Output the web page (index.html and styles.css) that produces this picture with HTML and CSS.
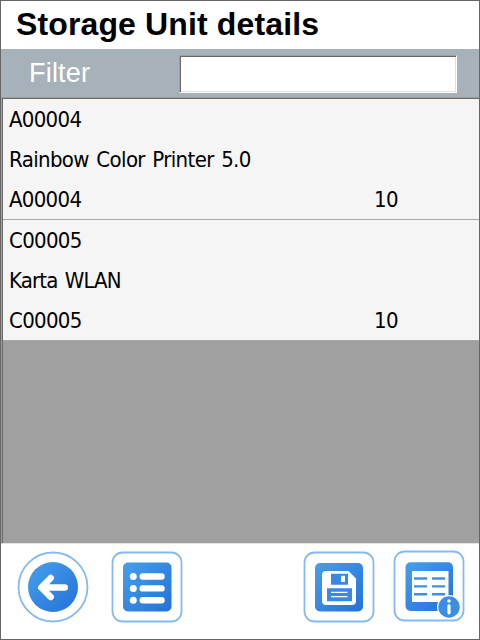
FILE: index.html
```html
<!DOCTYPE html>
<html lang="en">
<head>
<meta charset="utf-8">
<title>Storage Unit details</title>
<link rel="stylesheet" href="styles.css">
</head>
<body>
<main class="window">
  <h1 class="title"><span>Storage Unit details</span></h1>
  <div class="filter">
    <label class="filter-label" for="filter">Filter</label>
    <input class="filter-input" id="filter" type="text">
  </div>
  <section class="list">
    <article class="item">
      <div class="line">A00004</div>
      <div class="line name">Rainbow Color Printer 5.0</div>
      <div class="line"><span class="code">A00004</span><span>10</span></div>
    </article>
    <article class="item">
      <div class="line">C00005</div>
      <div class="line name short">Karta WLAN</div>
      <div class="line"><span class="code">C00005</span><span>10</span></div>
    </article>
  </section>
  <nav class="toolbar">
    <svg class="btn back" viewBox="0 0 72 72">
      <defs><linearGradient id="g" x1="0" y1="0" x2="1" y2="1"><stop offset="0" stop-color="#46a0ea"/><stop offset="1" stop-color="#2470da"/></linearGradient></defs>
      <circle cx="36" cy="36" r="34.5" class="frame"/>
      <circle cx="36" cy="36" r="25" fill="url(#g)"/>
      <path d="M47.7 36.5H25M33.7 27L24.3 36.5L33.7 46" class="arrow"/>
    </svg>
    <svg class="btn menu" viewBox="0 0 72 72">
      <rect x="1.5" y="1.5" width="69" height="69" rx="10" class="frame"/>
      <rect x="12" y="11.5" width="48.5" height="49" rx="5" fill="url(#g)"/>
      <g fill="#fff"><circle cx="22.3" cy="25.5" r="3.5"/><circle cx="22.3" cy="37.4" r="3.5"/><circle cx="22.3" cy="49.3" r="3.5"/>
      <rect x="28.5" y="22.3" width="25.2" height="6.4" rx="3.2"/><rect x="28.5" y="34.2" width="25.2" height="6.4" rx="3.2"/><rect x="28.5" y="46.1" width="25.2" height="6.4" rx="3.2"/></g>
    </svg>
    <svg class="btn save" viewBox="0 0 72 72">
      <rect x="1.5" y="1.5" width="69" height="69" rx="10" class="frame"/>
      <rect x="12" y="12" width="48" height="48.5" rx="5" fill="url(#g)"/>
      <path fill="#fff" d="M23 20H45.5L53 27.5V50Q53 54 49 54H23Q19 54 19 50V24Q19 20 23 20Z"/>
      <path fill="#3789e3" fill-rule="evenodd" d="M28 22.7H45V33.7H28ZM38 24.7V31H42V24.7ZM24 37.3H49V50.3H24ZM28 40.7V42H44.5V40.7ZM28 45V46.3H44.5V45Z"/>
    </svg>
    <svg class="btn info" viewBox="0 0 72 72">
      <rect x="1.5" y="1.5" width="69" height="69" rx="10" class="frame"/>
      <rect x="12.5" y="12.2" width="47.5" height="48.8" rx="5" fill="url(#g)"/>
      <path fill="#fff" d="M19 21H55.5V52H19Z"/>
      <path d="M21 28.5H34M39 28.5H52M21 36.4H34M39 36.4H52M21 44.2H34M39 44.2H52" stroke="#3f90e5" stroke-width="2.4"/>
      <circle cx="56" cy="57" r="12" fill="#fff"/><circle cx="56" cy="57" r="10.7" fill="#3a8ee4"/>
      <circle cx="56" cy="51" r="1.8" fill="#fff"/><path d="M56 55.8V62.8" stroke="#fff" stroke-width="3.2" stroke-linecap="round"/>
    </svg>
  </nav>
</main>
</body>
</html>
```
FILE: styles.css
```css
* { box-sizing: border-box; }
body { margin: 0; background: #fff; }
.window {
  width: 480px;
  height: 640px;
  border: 1px solid #666;
  display: flex;
  flex-direction: column;
  overflow: hidden;
}
.title {
  margin: 0;
  height: 48px;
  padding-left: 15px;
  font: bold 32px/46px "Liberation Sans", Arial, sans-serif;
  letter-spacing: 0.13px;
  color: #000;
}
.filter {
  height: 48px;
  background: #a7b1b9;
  display: flex;
  align-items: flex-start;
}
.filter-label {
  width: 178px;
  padding-left: 28px;
  font: 27px/48px "Liberation Sans", Arial, sans-serif;
  letter-spacing: 0.2px;
  color: #fff;
}
.filter-input {
  width: 278px;
  height: 38px;
  margin-top: 6px;
  padding: 0 4px;
  border: 1px solid;
  border-color: #a0a0a0 #fff #fff #a0a0a0;
  box-shadow: inset 1px 1px #6b6769, inset -1px -1px #e3e1e0;
  outline: 0;
  background: #fff;
  font: 27px "Liberation Sans", Arial, sans-serif;
}
.list {
  height: 447px;
  background: #a0a0a0;
  border: 1px solid #a0a0a0;
  border-width: 1px 0 1px 1px;
  border-bottom-color: #e3e3e3;
  box-shadow: inset 1px 1px #696969;
  padding: 1px 0 0 1px;
}
.item {
  background: #f5f5f5;
  height: 121px;
  border-bottom: 1px solid #a7a7a7;
}
.line {
  height: 40px;
  padding-left: 6px;
  display: flex;
  font: 22px/41px "DejaVu Sans Condensed", "DejaVu Sans", sans-serif;
  font-stretch: condensed;
  letter-spacing: -0.7px;
  color: #000;
  white-space: pre;
}
.name { letter-spacing: -0.63px; word-spacing: 1.8px; }
.short { letter-spacing: -0.85px; }
.code { width: 365px; }
.toolbar {
  flex: 1;
  display: flex;
  align-items: flex-start;
  padding: 7px 0 0 16px;
}
.btn { width: 72px; height: 72px; flex: none; }
.menu { margin-left: 22px; }
.save { margin-left: 120px; }
.info { margin-left: 18px; margin-top: -1px; }
.frame { fill: #fff; stroke: #85baf0; stroke-width: 1.8; }
.arrow { fill: none; stroke: #fff; stroke-width: 6.5; stroke-linecap: round; stroke-linejoin: round; }
```
